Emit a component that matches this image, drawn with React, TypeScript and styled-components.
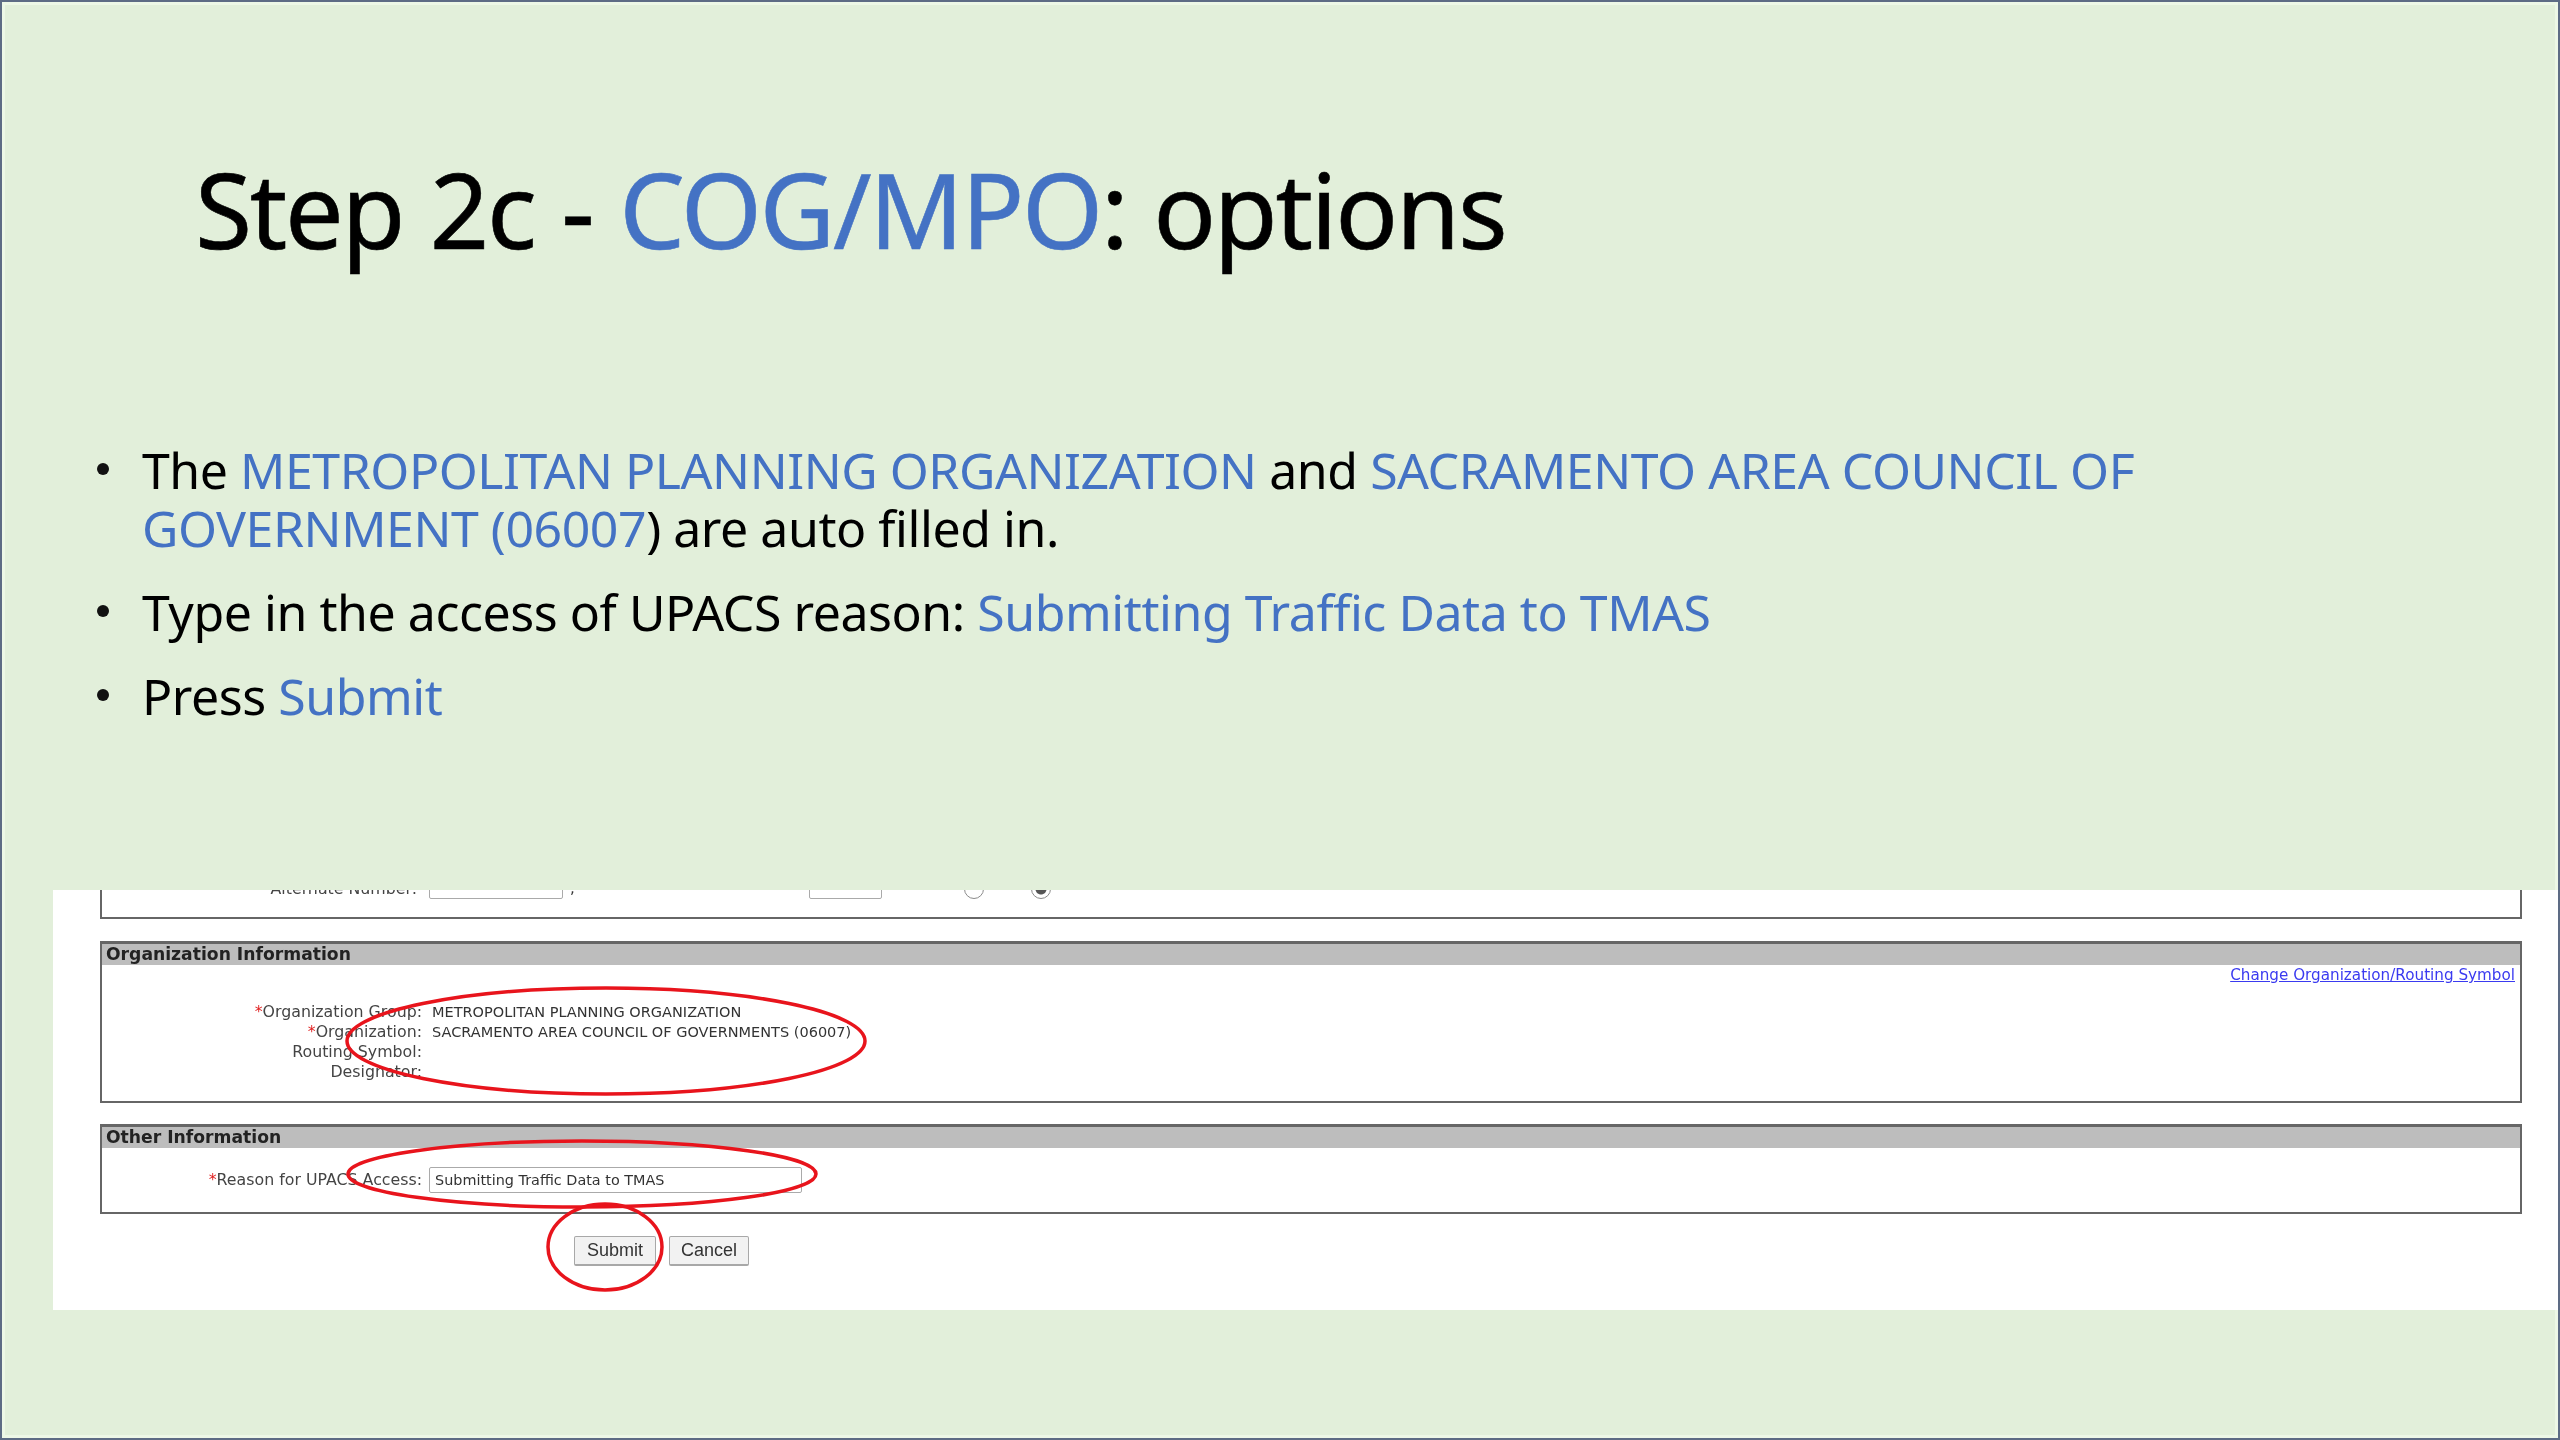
import React from 'react'
import styled, { createGlobalStyle } from 'styled-components'

const GlobalStyle = createGlobalStyle`
  html, body {
    margin: 0;
    padding: 0;
    background: #e2efda;
  }
`

const Slide = styled.div`
  box-sizing: border-box;
  width: 2560px;
  height: 1440px;
  overflow: hidden;
  display: flex;
  flex-direction: column;
  border: 2px solid #5d6b84;
  background: #e2efda;
  box-shadow: inset 0 0 0 3px #edf7e6;
  font-family: 'Noto Sans', sans-serif;
  color: #000;
`

const Title = styled.h1`
  margin: 137px 0 0 193px;
  font-size: 104px;
  line-height: 140px;
  font-weight: 400;
  letter-spacing: -2.3px;
  word-spacing: 2px;
  white-space: nowrap;
  -webkit-text-stroke: 0.6px #000;
`

const Accent = styled.span`
  color: #4472c4;
  -webkit-text-stroke-color: #4472c4;
`

const BulletList = styled.ul`
  list-style: none;
  margin: 162px 0 0;
  padding: 0 0 0 140px;
  font-size: 50px;
  line-height: 58px;
  letter-spacing: -0.45px;
  white-space: nowrap;
`

const BulletItem = styled.li`
  position: relative;
  margin-bottom: 26px;

  &::before {
    content: '';
    position: absolute;
    left: -45px;
    top: 22px;
    width: 12px;
    height: 12px;
    border-radius: 50%;
    background: #111;
  }
`

const Screenshot = styled.div`
  position: relative;
  box-sizing: border-box;
  flex: none;
  width: 2508px;
  height: 420px;
  margin: auto 0 128px 51px;
  background: #fff;
  overflow: hidden;
`

const Blurred = styled.div`
  box-sizing: border-box;
  height: 100%;
  padding: 0 39px 0 47px;
  display: flex;
  flex-direction: column;
  filter: blur(0.6px);
  font-family: 'DejaVu Sans', sans-serif;
  color: #333;
`

const Box = styled.section`
  box-sizing: border-box;
  margin-top: 22px;
  border: 2px solid #666;
  border-top-width: 3px;
`

const OtherBox = styled(Box)`
  margin-top: 21px;
`

const ClippedBox = styled.div`
  box-sizing: border-box;
  height: 59px;
  margin-top: -30px;
  flex: none;
  border: 2px solid #666;
  border-top: 0;
  display: flex;
  align-items: flex-end;
`

const AltRow = styled.div`
  position: relative;
  display: flex;
  align-items: flex-end;
  gap: 7px;
  margin-bottom: 18px;
`

const AltInput = styled.div<{ $width: number }>`
  box-sizing: border-box;
  width: ${(p) => p.$width}px;
  height: 26px;
  border: 1px solid #aaa;
  border-radius: 2px;
`

const Mark = styled.span<{ $width: number }>`
  width: ${(p) => p.$width}px;
  font-size: 15px;
  line-height: 22px;
`

const Radio = styled.span<{ $left: number; $checked?: boolean }>`
  box-sizing: border-box;
  width: 20px;
  height: 20px;
  margin-left: ${(p) => p.$left - 7}px;
  border: 1.5px solid #8a8a8a;
  border-radius: 50%;
  background: ${(p) => (p.$checked ? 'radial-gradient(circle, #555 0 5px, #fff 6px)' : '#fff')};
`

const BoxHeader = styled.h2`
  margin: 0;
  height: 21px;
  padding-left: 4px;
  background: #bdbdbd;
  font-size: 17.2px;
  line-height: 21px;
  font-weight: 700;
  color: #222;
`

const LinkRow = styled.div`
  display: flex;
  justify-content: flex-end;
  padding: 0 5px 0 0;
  height: 22px;
`

const ChangeLink = styled.a`
  font-size: 15.2px;
  line-height: 20px;
  color: #3a3af0;
  text-decoration: underline;
`

const OrgRows = styled.div`
  display: flex;
  flex-direction: column;
  padding: 15px 0 19px;
`

const Field = styled.div`
  display: grid;
  grid-template-columns: 320px 1fr;
  column-gap: 7px;
  height: 20px;
  align-items: center;
`

const Label = styled.div`
  box-sizing: border-box;
  width: 320px;
  flex: none;
  font-size: 15.8px;
  line-height: 20px;
  text-align: right;
  white-space: nowrap;
  color: #444;
`

const AltLabel = styled(Label)`
  padding-right: 5px;
`

const Req = styled.span`
  color: #e02020;
`

const Value = styled.div`
  padding-left: 3px;
  font-size: 14.5px;
  line-height: 20px;
  white-space: nowrap;
  color: #333;
`

const ReasonRow = styled(Field)`
  height: auto;
  padding: 19px 0 19px;
`

const ReasonInput = styled.div`
  box-sizing: border-box;
  width: 373px;
  height: 26px;
  padding-left: 5px;
  border: 1px solid #aaa;
  border-radius: 2px;
  font-size: 14.4px;
  line-height: 24px;
  white-space: nowrap;
  color: #333;
`

const Actions = styled.div`
  display: flex;
  gap: 13px;
  margin: 22px 0 0 474px;
`

const FormButton = styled.div<{ $width: number }>`
  box-sizing: border-box;
  width: ${(p) => p.$width}px;
  height: 30px;
  border: 1px solid #a8a8a8;
  border-bottom-width: 2px;
  border-radius: 2px;
  background: #f2f2f2;
  font-family: 'Liberation Sans', sans-serif;
  font-size: 18px;
  line-height: 27px;
  text-align: center;
  color: #333;
`

const Callouts = styled.svg`
  position: absolute;
  inset: 0;
  width: 100%;
  height: 100%;
  pointer-events: none;
`

const bullets = [
  {
    id: 'autofill',
    content: (
      <>
        The <Accent>METROPOLITAN PLANNING ORGANIZATION</Accent> and <Accent>SACRAMENTO AREA COUNCIL OF</Accent>
        <br />
        <Accent>GOVERNMENT (06007</Accent>) are auto filled in.
      </>
    ),
  },
  {
    id: 'reason',
    content: (
      <>
        Type in the access of UPACS reason: <Accent>Submitting Traffic Data to TMAS</Accent>
      </>
    ),
  },
  {
    id: 'press',
    content: (
      <>
        Press <Accent>Submit</Accent>
      </>
    ),
  },
]

const orgRows = [
  { label: 'Organization Group:', value: 'METROPOLITAN PLANNING ORGANIZATION', required: true },
  { label: 'Organization:', value: 'SACRAMENTO AREA COUNCIL OF GOVERNMENTS (06007)', required: true },
  { label: 'Routing Symbol:', value: '', required: false },
  { label: 'Designator:', value: '', required: false },
]

const App = () => {
  return (
    <Slide>
      <GlobalStyle />
      <Title>
        Step 2c - <Accent>COG/MPO</Accent>: options
      </Title>
      <BulletList>
        {bullets.map((b) => (
          <BulletItem key={b.id}>{b.content}</BulletItem>
        ))}
      </BulletList>
      <Screenshot>
        <Blurred>
          <ClippedBox>
            <AltRow>
              <AltLabel>Alternate Number:</AltLabel>
              <AltInput $width={134} />
              <Mark $width={232}>,</Mark>
              <AltInput $width={73} />
              <Radio $left={82} />
              <Radio $left={47} $checked />
            </AltRow>
          </ClippedBox>
          <Box>
            <BoxHeader>Organization Information</BoxHeader>
            <LinkRow>
              <ChangeLink>Change Organization/Routing Symbol</ChangeLink>
            </LinkRow>
            <OrgRows>
              {orgRows.map((r) => (
                <Field key={r.label}>
                  <Label>
                    {r.required && <Req>*</Req>}
                    {r.label}
                  </Label>
                  <Value>{r.value}</Value>
                </Field>
              ))}
            </OrgRows>
          </Box>
          <OtherBox>
            <BoxHeader>Other Information</BoxHeader>
            <ReasonRow>
              <Label>
                <Req>*</Req>Reason for UPACS Access:
              </Label>
              <ReasonInput>Submitting Traffic Data to TMAS</ReasonInput>
            </ReasonRow>
          </OtherBox>
          <Actions>
            <FormButton $width={82}>Submit</FormButton>
            <FormButton $width={80}>Cancel</FormButton>
          </Actions>
        </Blurred>
        <Callouts viewBox="0 0 2508 420" aria-hidden="true">
          <ellipse cx="553" cy="151" rx="259" ry="53" fill="none" stroke="#e8141c" strokeWidth="3.5" />
          <ellipse cx="529" cy="284" rx="234" ry="33" fill="none" stroke="#e8141c" strokeWidth="3.5" />
          <ellipse cx="552" cy="357" rx="57" ry="43" fill="none" stroke="#e8141c" strokeWidth="3.5" />
        </Callouts>
      </Screenshot>
    </Slide>
  )
}

export default App
